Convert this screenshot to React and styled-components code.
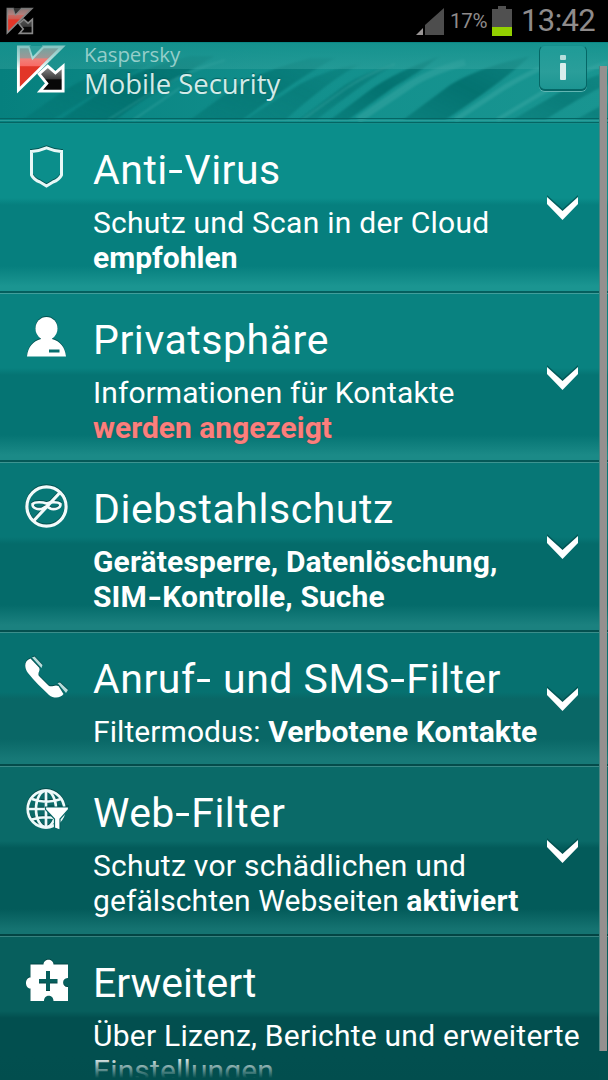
import React from 'react';
import styled, { createGlobalStyle } from 'styled-components';

const GlobalStyle = createGlobalStyle`
  * {
    box-sizing: border-box;
  }

  body {
    margin: 0;
    overflow: hidden;
    background: #024e4e;
    font-family: Roboto, sans-serif;
  }
`;

const Screen = styled.div`
  position: relative;
  display: flex;
  flex-direction: column;
  width: 608px;
  height: 1080px;
  overflow: hidden;
  color: #fff;
`;

const StatusBar = styled.div`
  display: flex;
  align-items: center;
  flex: none;
  height: 42px;
  padding: 0 13px 0 6px;
  background: #000;
  color: #8f8b8b;
`;

const StatusLogo = styled.div`
  display: flex;
  flex: 1;
`;

const SignalIcon = styled.svg`
  margin-right: 6px;
`;

const Percent = styled.span`
  width: 38px;
  margin-right: 4px;
  font-size: 20.5px;
  letter-spacing: -0.3px;
  white-space: nowrap;
`;

const BatteryIcon = styled.svg`
  margin-right: 9px;
`;

const Clock = styled.span`
  width: 74px;
  font-size: 31px;
  line-height: 40px;
  letter-spacing: -0.6px;
  white-space: nowrap;
`;

const Header = styled.header`
  position: relative;
  display: flex;
  flex: none;
  height: 81px;
  padding: 0 21px 0 16px;
  overflow: hidden;
  background: #0d8a87;
`;

const Streaks = styled.svg`
  position: absolute;
  inset: 0;
`;

const HeaderLogo = styled.div`
  position: relative;
  flex: none;
  padding-top: 2px;
`;

const Brand = styled.div`
  position: relative;
  flex: 1;
  padding-left: 18px;
  font-family: 'Open Sans', sans-serif;
  white-space: nowrap;
`;

const BrandName = styled.div`
  font-size: 20.5px;
  line-height: 24px;
  letter-spacing: -0.1px;
  color: #95ceca;
`;

const ProductName = styled.div`
  margin-top: 1px;
  font-size: 27.5px;
  line-height: 34px;
  letter-spacing: -0.05px;
  color: #d3ebe9;
  text-shadow: 0 -1px 1px #05605f;
`;

const InfoButton = styled.button`
  position: relative;
  display: flex;
  justify-content: center;
  width: 48px;
  height: 46px;
  margin-top: 3px;
  padding: 9px 0 0;
  border: 1px solid #056766;
  border-top-color: #15908d;
  border-bottom-width: 2px;
  border-radius: 6px;
  background: linear-gradient(#1f9b97, #2a9e9a 60%, #1d9592);
  box-shadow: 0 1px 0 #62b6b3;
`;

const Row = styled.section`
  display: grid;
  grid-template-columns: 93px ${({ $wide }) => ($wide ? '1fr' : '448px 1fr')};
  flex: none;
  height: ${({ $height }) => $height}px;
  border-top: 1px solid ${({ $line }) => $line};
  background: linear-gradient(
    ${({ $top, $low, $glow, $split }) => `
      ${$top} 0, ${$top} ${$split - 3}px, ${$low} ${$split + 4}px, ${$low} calc(100% - 27px),
      ${$glow} calc(100% - 7px), ${$glow} calc(100% - 2px)
    `},
    ${({ $edge }) => $edge} calc(100% - 2px)
  );
`;

const IconCell = styled.div`
  padding: 20px 0 0 23px;

  svg {
    display: block;
    filter: drop-shadow(0 -1px 0 rgba(0, 60, 60, 0.7));
  }
`;

const Title = styled.h2`
  margin: 23px 0 0;
  font-size: 41px;
  font-weight: 400;
  line-height: 46px;
  letter-spacing: ${({ $spacing }) => $spacing}px;
  white-space: nowrap;
`;

const Line = styled.p`
  margin: 0;
  font-size: 30px;
  line-height: 35px;
  letter-spacing: ${({ $spacing }) => $spacing}px;
  white-space: nowrap;

  &:nth-child(2) {
    margin-top: 12px;
  }
`;

const Dash = styled.span`
  display: inline-block;
  margin: 0 0.06em;
  transform: scaleX(1.3);
`;

const Alert = styled.b`
  color: #fb7f7d;
  text-shadow: 0 0 1px #5a3a3a;
`;

const Expander = styled.div`
  display: flex;
  align-items: center;
  padding: 0 0 1px 5px;

  svg {
    filter: drop-shadow(0 -2px 0 rgba(0, 70, 70, 0.6));
  }
`;

const Scrollbar = styled.div`
  position: absolute;
  top: 66px;
  right: 1px;
  width: 8px;
  height: 985px;
  background: #95908f;
  border-left: 1px solid #4d8380;
`;

const BottomFade = styled.div`
  position: absolute;
  right: 9px;
  bottom: 0;
  left: 0;
  height: 24px;
  background: linear-gradient(rgba(2, 78, 78, 0), #024e4e 92%);
`;

const TopFade = styled.div`
  position: absolute;
  top: 0;
  right: 0;
  left: 0;
  height: 27px;
  border-top: 1px solid #0b8785;
  background: linear-gradient(rgba(21, 146, 142, 0.85), rgba(60, 168, 163, 0.4));
`;

const Logo = ({ size, muted }) => (
  <svg width={size} height={size} viewBox="0 0 52 52">
    <defs>
      <linearGradient id={`red${size}`} x1="0" y1="0" x2="0" y2="1">
        <stop offset="0" stopColor={muted ? '#8d7674' : '#6fa5a1'} />
        <stop offset="0.25" stopColor={muted ? '#b2827f' : '#9d9896'} />
        <stop offset="0.28" stopColor={muted ? '#c86a62' : '#f08079'} />
        <stop offset="0.43" stopColor={muted ? '#d0584f' : '#f86c66'} />
        <stop offset="0.46" stopColor="#e23628" />
        <stop offset="1" stopColor="#e23628" />
      </linearGradient>
      <linearGradient id={`black${size}`} x1="0" y1="0" x2="0" y2="1">
        <stop offset="0" stopColor={muted ? '#555' : '#929292'} />
        <stop offset="0.5" stopColor="#3c3c3c" />
        <stop offset="0.55" stopColor="#080808" />
      </linearGradient>
      <linearGradient id={`edge${size}`} x1="0" y1="0" x2="0" y2="1">
        <stop offset="0" stopColor={muted ? '#777' : '#86c7c3'} />
        <stop offset="0.3" stopColor={muted ? '#8a8a8a' : '#b5dedb'} />
        <stop offset="0.5" stopColor={muted ? '#8a8a8a' : '#fff'} />
      </linearGradient>
    </defs>
    <path
      d="M2.5 3H14L17.5 14L28 3H48L2.5 48Z"
      fill={`url(#red${size})`}
      stroke={`url(#edge${size})`}
      strokeWidth="3"
    />
    <path
      d="M24 31L33 23L41 30L49 23V49H25L32 41Z"
      fill={`url(#black${size})`}
      stroke={muted ? '#888' : '#fff'}
      strokeWidth="3"
    />
    <path d="M14 2H28L17.5 13Z" fill={muted ? '#333' : '#2f9f9b'} />
  </svg>
);

const ShieldIcon = () => (
  <svg width="46" height="46" viewBox="0 0 46 46" fill="none" stroke="#e8f8f7" strokeWidth="3">
    <path d="M8.5 7.5Q16 7 23.5 3.8Q31 7 38.5 7.5V31Q36 36 30 38L23.5 42L17 38Q11 36 8.5 31Z" />
  </svg>
);

const PersonIcon = () => (
  <svg width="46" height="46" viewBox="0 0 46 46">
    <ellipse cx="23.5" cy="14.5" rx="11" ry="11.5" fill="#fff" />
    <path d="M18 20H29V25C37 27 42 33 43 42.5H4C5 33 10 27 18 25Z" fill="#fff" />
    <rect x="26" y="35.5" width="10.5" height="3" fill="#066f6e" />
  </svg>
);

const ThiefIcon = () => (
  <svg width="46" height="46" viewBox="0 0 46 46" fill="none" stroke="#f2fbfb">
    <circle cx="23.5" cy="23.5" r="19.6" strokeWidth="3.200" />
    <path d="M37 9.500L10.500 38" strokeWidth="3.200" />
    <path
      d="M9.500 21C12 18.500 20 19 23.500 20.500C27 19 35 18.500 37.500 21C38 25.500 32 26.500 28.500 26C26.500 25.500 25 23.500 23.500 23.500C22 23.500 20.500 25.500 18.500 26C15 26.500 9 25.500 9.500 21Z"
      strokeWidth="2.600"
    />
  </svg>
);

const PhoneIcon = () => (
  <svg width="46" height="46" viewBox="0 0 46 46" fill="#fff">
    <path d="M7.5 5.500C1 8 1 14 5 20C11 28 19 35 26 42C31 46 38 45 40.500 41L35.500 33C31.500 31 29 35 25.500 32.500L16 23C14 20 18 17.500 16 14.500Z" />
    <path d="M9 4.5L11.5 3.5L19.5 12L18.5 15ZM34.5 30L37 29.5L45 37L43 40Z" fill="#b9dcda" />
  </svg>
);

const GlobeIcon = () => (
  <svg width="46" height="46" viewBox="0 0 46 46" fill="none" stroke="#eefafa" strokeWidth="2.7">
    <circle cx="23" cy="22" r="18.3" />
    <ellipse cx="23" cy="22" rx="10" ry="18.3" />
    <path d="M23 4V41M5 22H42M9 12Q23 17.5 38 12M9 32.5Q23 28 38 32.5" />
    <path
      d="M22.5 20H45.500V22.500L37 32V43L31.500 41V32L22.5 22.500Z"
      fill="#fff"
      stroke="#0a6968"
      strokeWidth="1.2"
    />
  </svg>
);

const PuzzleIcon = () => (
  <svg width="46" height="46" viewBox="0 0 46 46" fill="#fff">
    <path
      fillRule="evenodd"
      d="M7.5 7.5H20.5C20.5 1 30.5 1 30.5 7.5H45V21C38.5 20.5 38.5 30.5 45 30V44H30.5C30.5 37 21 37 21 44H7.5V31.5C1.5 31.5 1.5 20.5 7.5 20.5ZM23 14V22H16V26.5H23V34H27V26.5H34.5V22H27V14Z"
    />
  </svg>
);

const Chevron = () => (
  <svg width="32" height="26" viewBox="0 0 32 26">
    <path d="M1 2L16.5 16L32 2V9L16.5 25L1 9Z" fill="#fff" />
  </svg>
);

const sections = [
  {
    title: <>Anti<Dash>-</Dash>Virus</>,
    spacing: 0.5,
    icon: <ShieldIcon />,
    lines: [
      { text: 'Schutz und Scan in der Cloud', spacing: 0.26 },
      { text: <b>empfohlen</b>, spacing: 0 }
    ],
    height: 170,
    split: 77,
    colors: ['#0b8e8b', '#067f7e', '#1b9591', '#055f5e', '#148f8c']
  },
  {
    title: 'Privatsphäre',
    spacing: 0.55,
    icon: <PersonIcon />,
    lines: [
      { text: 'Informationen für Kontakte', spacing: 0.08 },
      { text: <Alert>werden angezeigt</Alert>, spacing: 0 }
    ],
    height: 169,
    split: 77,
    colors: ['#098280', '#057473', '#1b8a87', '#055857', '#409e9b']
  },
  {
    title: 'Diebstahlschutz',
    spacing: 0.55,
    icon: <ThiefIcon />,
    lines: [
      { text: <b>Gerätesperre, Datenlöschung,</b>, spacing: 0.15 },
      { text: <b>SIM<Dash>-</Dash>Kontrolle, Suche</b>, spacing: 0.1 }
    ],
    height: 170,
    split: 77,
    colors: ['#077776', '#046b6a', '#1b817f', '#04504f', '#3d9491']
  },
  {
    title: <>Anruf<Dash>-</Dash> und SMS<Dash>-</Dash>Filter</>,
    spacing: 0.5,
    icon: <PhoneIcon />,
    lines: [{ text: <>Filtermodus: <b>Verbotene Kontakte</b></>, spacing: 0.08 }],
    height: 134,
    split: 62,
    colors: ['#067170', '#096766', '#177977', '#044b4a', '#3b8e8b']
  },
  {
    title: <>Web<Dash>-</Dash>Filter</>,
    spacing: 0.4,
    icon: <GlobeIcon />,
    lines: [
      { text: 'Schutz vor schädlichen und', spacing: 0.3 },
      { text: <>gefälschten Webseiten <b>aktiviert</b></>, spacing: 0.08 }
    ],
    height: 170,
    split: 77,
    colors: ['#0a6a68', '#035b5a', '#157371', '#034443', '#3a8986']
  },
  {
    title: 'Erweitert',
    spacing: 0,
    icon: <PuzzleIcon />,
    lines: [
      { text: 'Über Lizenz, Berichte und erweiterte', spacing: 0.25 },
      { text: 'Einstellungen', spacing: 0.15 }
    ],
    height: 170,
    split: 77,
    colors: ['#075f5d', '#024f4f', '#024f4f', '#024f4f', '#37827f'],
    last: true
  }
];

const App = () => {
  return (
    <>
      <GlobalStyle />
      <Screen>
        <StatusBar>
          <StatusLogo>
            <Logo size={28} muted />
          </StatusLogo>
          <SignalIcon width="28" height="28" viewBox="0 0 28 28">
            <path d="M0 28L7 21V28Z" fill="#999595" />
            <path d="M9 28V18L28 1V28Z" fill="#4d4d4d" />
          </SignalIcon>
          <Percent>17%</Percent>
          <BatteryIcon width="20" height="30" viewBox="0 0 20 30">
            <path d="M6 0H14V3H20V21H0V3H6Z" fill="#505050" />
            <rect y="21" width="20" height="9" fill="#93d000" />
          </BatteryIcon>
          <Clock>13:42</Clock>
        </StatusBar>

        <Header>
          <Streaks width="608" height="81" viewBox="0 0 608 81">
            <defs>
              <linearGradient id="base" x1="0" y1="0" x2="1" y2="0">
                <stop offset="0" stopColor="#06807e" />
                <stop offset="0.5" stopColor="#12908d" />
                <stop offset="1" stopColor="#199591" />
              </linearGradient>
              <linearGradient id="dark" x1="0" y1="1" x2="1" y2="0">
                <stop offset="0" stopColor="#036d6b" stopOpacity="0.5" />
                <stop offset="0.5" stopColor="#036d6b" stopOpacity="0.85" />
                <stop offset="1" stopColor="#036d6b" stopOpacity="0.5" />
              </linearGradient>
              <filter id="soften">
                <feGaussianBlur stdDeviation="0.9" />
              </filter>
            </defs>
            <rect width="608" height="81" fill="url(#base)" />
            <g fill="url(#dark)" filter="url(#soften)">
              <path d="M22 78L62 50Q90 32 120 22H150Q105 45 52 78Z" opacity="0.6" />
              <path d="M60 78L105 47Q145 24 190 14H215Q160 45 115 78Z" />
              <path d="M190 78L235 45Q265 28 310 16H335Q300 35 242 78Z" opacity="0.75" />
              <path d="M245 78L300 42Q330 26 360 22Q330 38 285 78Z" opacity="0.6" />
              <path d="M298 78L345 43Q365 30 395 22Q365 40 316 78Z" opacity="0.6" />
              <path d="M330 78L370 48Q395 30 440 14Q420 30 394 45L348 78Z" />
              <path d="M403 78L450 43Q480 25 530 14Q505 38 445 78Z" />
              <path d="M512 78L560 50Q580 38 608 30V42Q580 55 545 78Z" opacity="0.7" />
              <path d="M575 78L608 60V78Z" opacity="0.6" />
            </g>
            <g stroke="#4fb5b1" strokeWidth="2" fill="none" opacity="0.3" filter="url(#soften)">
              <path d="M108 78L160 45Q190 28 225 18" />
              <path d="M133 78L180 46" />
              <path d="M302 78L345 47Q365 33 395 22" />
              <path d="M358 78L410 43Q430 30 465 20" strokeWidth="7" />
              <path d="M455 78L505 45Q530 30 560 18" strokeWidth="5" />
              <path d="M497 78L550 46Q575 32 608 20" strokeWidth="4" />
            </g>
            <path d="M0 76.5H608M0 80.5H608" stroke="#056563" strokeWidth="1.2" />
            <path d="M0 78.5H608" stroke="#2a9d99" />
          </Streaks>
          <TopFade />
          <HeaderLogo>
            <Logo size={50} />
          </HeaderLogo>
          <Brand>
            <BrandName>Kaspersky</BrandName>
            <ProductName>Mobile Security</ProductName>
          </Brand>
          <InfoButton>
            <svg width="8" height="26" viewBox="0 0 8 26">
              <rect x="1" y="0" width="6" height="5" rx="1" fill="#b5dedb" />
              <rect x="1" y="8" width="6" height="17" rx="1" fill="#d8eeec" />
            </svg>
          </InfoButton>
        </Header>

        {sections.map(({ title, spacing, icon, lines, height, split, colors, last }, index) => (
          <Row
            key={index}
            $height={height}
            $split={split}
            $top={colors[0]}
            $low={colors[1]}
            $glow={colors[2]}
            $edge={colors[3]}
            $line={colors[4]}
            $wide={last}
          >
            <IconCell>{icon}</IconCell>
            <div>
              <Title $spacing={spacing}>{title}</Title>
              {lines.map((line, lineIndex) => (
                <Line key={lineIndex} $spacing={line.spacing}>{line.text}</Line>
              ))}
            </div>
            {!last && (
              <Expander>
                <Chevron />
              </Expander>
            )}
          </Row>
        ))}

        <BottomFade />
        <Scrollbar />
      </Screen>
    </>
  );
};

export default App;
